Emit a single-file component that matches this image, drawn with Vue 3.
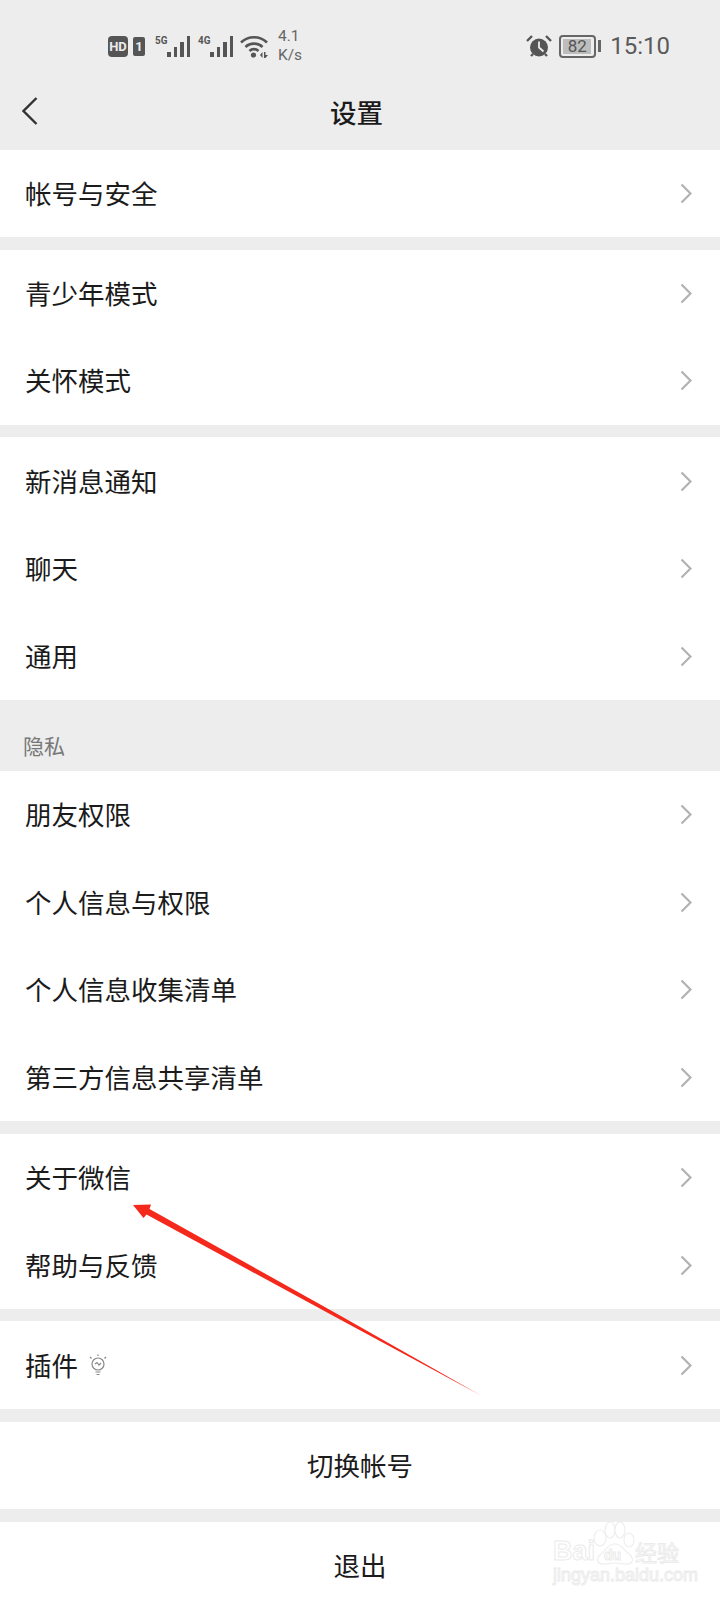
<script setup>
const groups = [
  { items: ["帐号与安全"] },
  { items: ["青少年模式", "关怀模式"] },
  { items: ["新消息通知", "聊天", "通用"], last: true },
  { label: "隐私", items: ["朋友权限", "个人信息与权限", "个人信息收集清单", "第三方信息共享清单"] },
  { items: ["关于微信", "帮助与反馈"] },
  { items: ["插件"] }
]
const barHeights = [5, 10, 15, 21]
</script>

<template>
  <div class="page">
    <div class="status">
      <div class="status-left">
        <span class="hd">HD</span>
        <span class="sim">1</span>
        <span class="net">
          <small>5G</small>
          <span class="bars"><i v-for="h in barHeights" :key="h" :style="{ height: h + 'px' }"></i></span>
        </span>
        <span class="net">
          <small>4G</small>
          <span class="bars"><i v-for="h in barHeights" :key="h" :style="{ height: h + 'px' }"></i></span>
        </span>
        <svg class="wifi" width="28" height="24" viewBox="0 0 28 24">
          <path d="M1 8.5C8 1.5 20 1.5 27 8.5M5.5 13C10 8.5 18 8.5 22.5 13M9.5 17C12 14.5 16 14.5 18.5 17" fill="none" stroke="#555" stroke-width="2.6"/>
          <circle cx="13.5" cy="21" r="2.6" fill="#555"/>
          <path d="M20 21l2.5-3v6zM24 18h1.5v3l2.5 0-2.5 3h-1.5z" fill="#555"/>
        </svg>
        <span class="speed">4.1<br>K/s</span>
      </div>
      <div class="status-right">
        <svg width="26" height="23" viewBox="0 0 26 23">
          <circle cx="13" cy="12.5" r="9" fill="#555"/>
          <path d="M13 6.5v6l4.5 4" fill="none" stroke="#ededed" stroke-width="1.8"/>
          <path d="M1 6l5-5M25 6l-5-5M5 21l2-2M21 21l-2-2" stroke="#555" stroke-width="2.4" fill="none"/>
        </svg>
        <span class="battery"><span class="level">82</span></span>
        <span class="nub"></span>
        <span class="clock">15:10</span>
      </div>
    </div>

    <header class="title-bar">
      <svg class="back" width="16" height="28" viewBox="0 0 16 28">
        <path d="M14.5 1L1.5 14l13 13" fill="none" stroke="#333" stroke-width="2.4"/>
      </svg>
      <h1>设置</h1>
    </header>

    <template v-for="(group, i) in groups" :key="i">
      <div v-if="group.label" class="section-label">{{ group.label }}</div>
      <section class="group" :class="{ flush: group.last }">
        <div class="row" v-for="item in group.items" :key="item">
          <span class="row-text">{{ item }}</span>
          <svg v-if="item === '插件'" class="bulb" width="20" height="22" viewBox="0 0 20 22">
            <circle cx="10" cy="10" r="6" fill="none" stroke="#888" stroke-width="1.2"/>
            <path d="M7 10l2-1.5 2 2.5 2-2M7.5 18h5M8.5 20.5h3M2 3l1.5 1.5M18 3l-1.5 1.5M10 0.5v1.5" fill="none" stroke="#888" stroke-width="1.2"/>
          </svg>
          <svg class="chev" width="12" height="21" viewBox="0 0 12 21">
            <path d="M1.5 1.5l9 9-9 9" fill="none" stroke="#b2b2b2" stroke-width="2.2"/>
          </svg>
        </div>
      </section>
    </template>

    <section class="group"><div class="row action"><span class="row-text">切换帐号</span></div></section>
    <section class="group"><div class="row action"><span class="row-text">退出</span></div></section>

    <svg class="arrow" width="720" height="1600" viewBox="0 0 720 1600">
      <path d="M133 1205L151 1204.5L149.5 1209L340 1315.5L481 1395.5L340 1319.5L146.5 1214.5L143.5 1218Z" fill="#f5281c"/>
    </svg>

    <svg class="mark" width="200" height="80" viewBox="0 0 200 80">
      <g fill="#fff" stroke="#eeeeee" stroke-width="1.2">
        <ellipse cx="60" cy="22" rx="6" ry="8"/>
        <ellipse cx="70" cy="14" rx="5" ry="8"/>
        <ellipse cx="80" cy="14" rx="5" ry="8"/>
        <ellipse cx="89" cy="24" rx="5" ry="7"/>
        <path d="M75 28c-8 0-9 7-14 10-6 5-4 11 4 10 4 0 7-1 10-1s6 1 10 1c8 1 10-5 4-10-5-3-6-10-14-10z"/>
      </g>
      <g fill="#fff" stroke="#ebebeb" stroke-width="1">
        <text x="13" y="44" font-size="27" font-family="'Liberation Sans', sans-serif" font-weight="700">Bai</text>
        <text x="64" y="44" font-size="14" font-family="'Liberation Sans', sans-serif" font-weight="700">du</text>
        <text x="95" y="45" font-size="22" font-family="'Noto Sans CJK SC', sans-serif">经验</text>
        <text x="13" y="65" font-size="18" font-family="'Liberation Sans', sans-serif">jingyan.baidu.com</text>
      </g>
    </svg>
  </div>
</template>

<style>
body {
  background: #ededed;
}
</style>

<style scoped>
.page {
  position: relative;
  width: 720px;
  height: 1600px;
  overflow: hidden;
  background: #ededed;
  font-family: "Noto Sans CJK SC", "Noto Sans", sans-serif;
  color: #1b1b1b;
}

.status {
  display: flex;
  justify-content: space-between;
  align-items: center;
  height: 92px;
  padding: 0 50px 0 108px;
  color: #555;
  font-family: Roboto, sans-serif;
}

.status-left,
.status-right {
  display: flex;
  align-items: center;
}

.hd {
  width: 20px;
  height: 21px;
  border-radius: 4px;
  background: #555;
  color: #ededed;
  font-size: 13px;
  font-weight: 700;
  line-height: 21px;
  text-align: center;
}

.sim {
  width: 12px;
  height: 19px;
  margin-left: 5px;
  border-radius: 2px;
  background: #555;
  color: #ededed;
  font-size: 13px;
  font-weight: 700;
  line-height: 19px;
  text-align: center;
}

.net {
  display: flex;
  align-items: flex-start;
  margin-left: 10px;
  height: 21px;
}

.net + .net {
  margin-left: 8px;
}

.net small {
  font-size: 11px;
  font-weight: 700;
  line-height: 10px;
  width: 11px;
  transform: scaleX(0.9);
  transform-origin: left;
}

.bars {
  display: flex;
  align-items: flex-end;
  gap: 3px;
  height: 21px;
  margin-left: 1px;
}

.bars i {
  display: block;
  width: 3.5px;
  background: #555;
}

.wifi {
  margin-left: 7px;
}

.speed {
  margin-left: 10px;
  font-size: 15.5px;
  line-height: 19px;
  color: #666;
}

.status-right svg {
  margin-right: -1px;
}

.battery {
  display: flex;
  align-items: center;
  width: 37px;
  height: 23px;
  margin-left: 8px;
  padding: 2px;
  box-sizing: border-box;
  border: 2px solid #666;
  border-radius: 4px;
}

.level {
  width: 28px;
  height: 15px;
  background: #bdbdbd;
  font-size: 17px;
  line-height: 15px;
  text-align: center;
  color: #555;
}

.nub {
  width: 3px;
  height: 12px;
  margin-left: 2px;
  background: #666;
}

.clock {
  margin-left: 9px;
  font-size: 24px;
  color: #5a5a5a;
}

.title-bar {
  position: relative;
  display: flex;
  align-items: center;
  justify-content: center;
  height: 57.5px;
  padding-right: 7px;
}

.title-bar .back {
  position: absolute;
  left: 22px;
  top: 5px;
}

.title-bar h1 {
  margin: 0 0 18px;
  font-size: 26.5px;
  font-weight: 500;
  line-height: 1;
}

.group {
  margin-bottom: 12.7px;
  background: #fff;
}

.group.flush {
  margin-bottom: 0;
}

.section-label {
  height: 71.2px;
  padding: 28px 0 0 23px;
  box-sizing: border-box;
  font-size: 21px;
  line-height: 34px;
  color: #777;
}

.row {
  display: flex;
  align-items: center;
  height: 87.5px;
  padding: 0 28px 0 25px;
}

.row-text {
  margin-bottom: 2px;
  font-size: 26.5px;
}

.bulb {
  margin-left: 10px;
}

.chev {
  margin-left: auto;
}

.action {
  justify-content: center;
  padding: 0;
}

.arrow,
.mark {
  position: absolute;
  pointer-events: none;
}

.arrow {
  left: 0;
  top: 0;
}

.mark {
  left: 540px;
  top: 1516px;
}
</style>
